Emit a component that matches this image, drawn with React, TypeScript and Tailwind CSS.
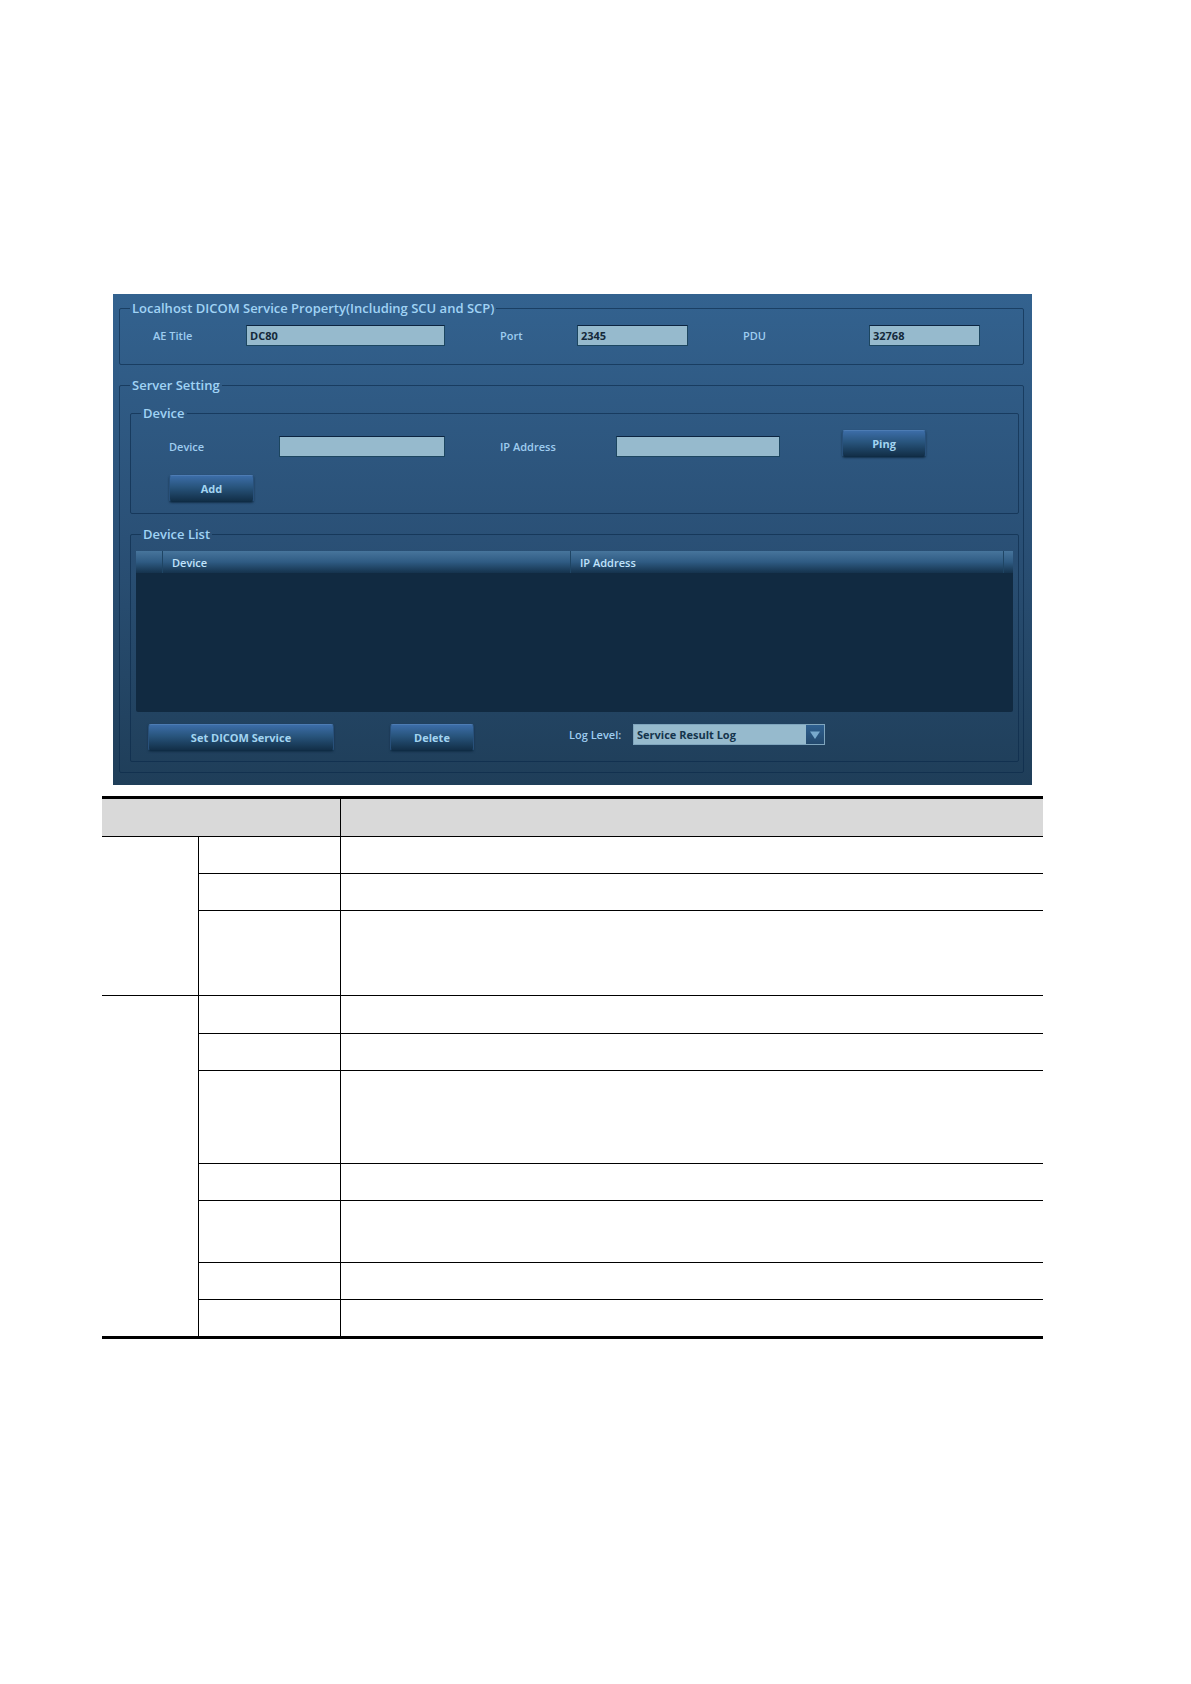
import { useId, type ReactNode } from "react";
import clsx from "clsx";

const ROWS = [
  { group: 3, height: "h-[37px]" },
  { height: "h-[37px]" },
  { height: "h-[85px]" },
  { group: 7, height: "h-[38px]" },
  { height: "h-[37px]" },
  { height: "h-[93px]" },
  { height: "h-[37px]" },
  { height: "h-[62px]" },
  { height: "h-[37px]" },
  { height: "h-9" },
];

function Group({ title, className, children }: { title: string; className?: string; children: ReactNode }) {
  return (
    <fieldset className={clsx("min-w-0 rounded-[2px] border border-[#0a2848]/60", className)}>
      <legend className="ml-2.5 px-0.5 text-[13px] leading-[21px] font-semibold text-[#a0d3f5]">{title}</legend>
      {children}
    </fieldset>
  );
}

function Field({ label, value, className }: { label: string; value?: string; className?: string }) {
  const id = useId();
  return (
    <>
      <label htmlFor={id} className="text-[11px] leading-[21px] font-semibold whitespace-nowrap text-[#9fcdf0]">
        {label}
      </label>
      <input
        id={id}
        type="text"
        defaultValue={value}
        className={clsx(
          "h-[21px] min-w-0 border border-[#1c4660] border-t-[#0c2440] bg-[#96bacd] px-[3px] text-[11px] leading-[18px] font-bold text-[#14293a] outline-none",
          className,
        )}
      />
    </>
  );
}

function PushButton({ children, className }: { children: ReactNode; className?: string }) {
  return (
    <button
      type="button"
      className={clsx(
        "rounded-[3px] border border-t-[#4d7cb4] border-r-[#28507a] border-b-[#0f2c45] border-l-[#28507a] bg-linear-to-b from-[#3c6da8] via-[#28547c] via-45% to-[#122f48] text-[11px] leading-4 font-bold text-[#a3d5f2] shadow-[0_1px_2px_#14304a]",
        className,
      )}
    >
      {children}
    </button>
  );
}

function DeviceTable() {
  return (
    <div className="h-[161px] rounded-[2px] bg-[#112a41]">
      <table className="w-full table-fixed border-separate border-spacing-0">
        <colgroup>
          <col className="w-[27px]" />
          <col className="w-[408px]" />
          <col />
          <col className="w-[9px]" />
        </colgroup>
        <thead>
          <tr className="h-[22px] bg-linear-to-b from-[#47759c] via-[#2f5b83] via-50% to-[#15334d] text-left text-[11px] leading-[21px] text-[#c0e3fb]">
            <th className="border-r border-[#1f4564] p-0" />
            <th className="border-r border-[#1f4564] py-0 pr-0 pl-[9px] font-semibold">Device</th>
            <th className="border-r border-[#1f4564] py-0 pr-0 pl-[9px] font-semibold">IP Address</th>
            <th className="p-0" />
          </tr>
        </thead>
      </table>
    </div>
  );
}

function LogLevel() {
  return (
    <div className="ml-[95px] flex h-[21px]">
      <label htmlFor="log-level" className="w-16 text-[11px] leading-[21px] font-semibold whitespace-nowrap text-[#9fcdf0]">
        Log Level:
      </label>
      <div className="relative w-48">
        <select
          id="log-level"
          className="block h-[21px] w-full appearance-none border border-[#7fa5bd] bg-[#96bacd] px-[3px] text-[11px] leading-[18px] font-bold text-[#14344c] outline-none"
        >
          <option>Service Result Log</option>
        </select>
        <span className="pointer-events-none absolute top-px right-px bottom-px flex w-[18px] items-center justify-center bg-linear-to-b from-[#2f6090] to-[#23496d]">
          <svg viewBox="0 0 10 8" className="h-2 w-2.5" aria-hidden="true">
            <path d="M0 0.5H10L5 8Z" fill="#78a9cc" />
          </svg>
        </span>
      </div>
    </div>
  );
}

function ServicePanel() {
  return (
    <section className="mx-[11px] bg-linear-to-b from-[#33628f] via-[#2a5076] via-50% to-[#1f3e59] pt-1 pr-2 pb-3 pl-1.5 font-['Open_Sans',sans-serif]">
      <Group title="Localhost DICOM Service Property(Including SCU and SCP)">
        <div className="grid grid-cols-[93fr_254fr_77fr_166fr_126fr_111fr] pt-1.5 pr-[43px] pb-[18px] pl-[33px]">
          <Field label="AE Title" value="DC80" className="mr-[55px]" />
          <Field label="Port" value="2345" className="mr-[55px]" />
          <Field label="PDU" value="32768" />
        </div>
      </Group>

      <Group title="Server Setting" className="mt-2.5">
        <div className="pt-[7px] pr-1 pb-2.5 pl-2.5">
          <Group title="Device">
            <div className="grid grid-cols-[110fr_221fr_116fr_226fr_84fr] items-end pt-1.5 pr-[92px] pl-[38px]">
              <Field label="Device" className="mr-[55px]" />
              <Field label="IP Address" className="mr-[62px]" />
              <PushButton className="h-[27px]">Ping</PushButton>
            </div>
            <div className="mt-[18px] pb-[11px] pl-[38px]">
              <PushButton className="h-[27px] w-[85px] align-top">Add</PushButton>
            </div>
          </Group>

          <Group title="Device List" className="mt-2.5">
            <div className="pt-1.5 pr-[5px] pb-2.5 pl-[5px]">
              <DeviceTable />
              <div className="mt-3 flex pl-3">
                <PushButton className="h-[27px] w-[186px]">Set DICOM Service</PushButton>
                <PushButton className="ml-14 h-[27px] w-[84px]">Delete</PushButton>
                <LogLevel />
              </div>
            </div>
          </Group>
        </div>
      </Group>
    </section>
  );
}

function DescriptionTable() {
  return (
    <table className="mt-[11px] w-full table-fixed border-separate border-spacing-0 border-y-[3px] border-black">
      <colgroup>
        <col className="w-[97px]" />
        <col className="w-[142px]" />
        <col />
      </colgroup>
      <thead>
        <tr className="h-[38px] bg-[#d9d9d9]">
          <th colSpan={2} className="border-r border-b border-black p-0" />
          <th className="border-b border-black p-0" />
        </tr>
      </thead>
      <tbody>
        {ROWS.map((row, i) => {
          const line = i < ROWS.length - 1 && "border-b";
          return (
            <tr key={i} className={row.height}>
              {row.group && (
                <td rowSpan={row.group} className={clsx("border-r border-black p-0", i === 0 && "border-b")} />
              )}
              <td className={clsx("border-r border-black p-0", line)} />
              <td className={clsx("border-black p-0", line)} />
            </tr>
          );
        })}
      </tbody>
    </table>
  );
}

export default function App() {
  return (
    <main className="min-h-screen bg-white pt-[294px] pr-[148px] pb-20 pl-[102px]">
      <ServicePanel />
      <DescriptionTable />
    </main>
  );
}
